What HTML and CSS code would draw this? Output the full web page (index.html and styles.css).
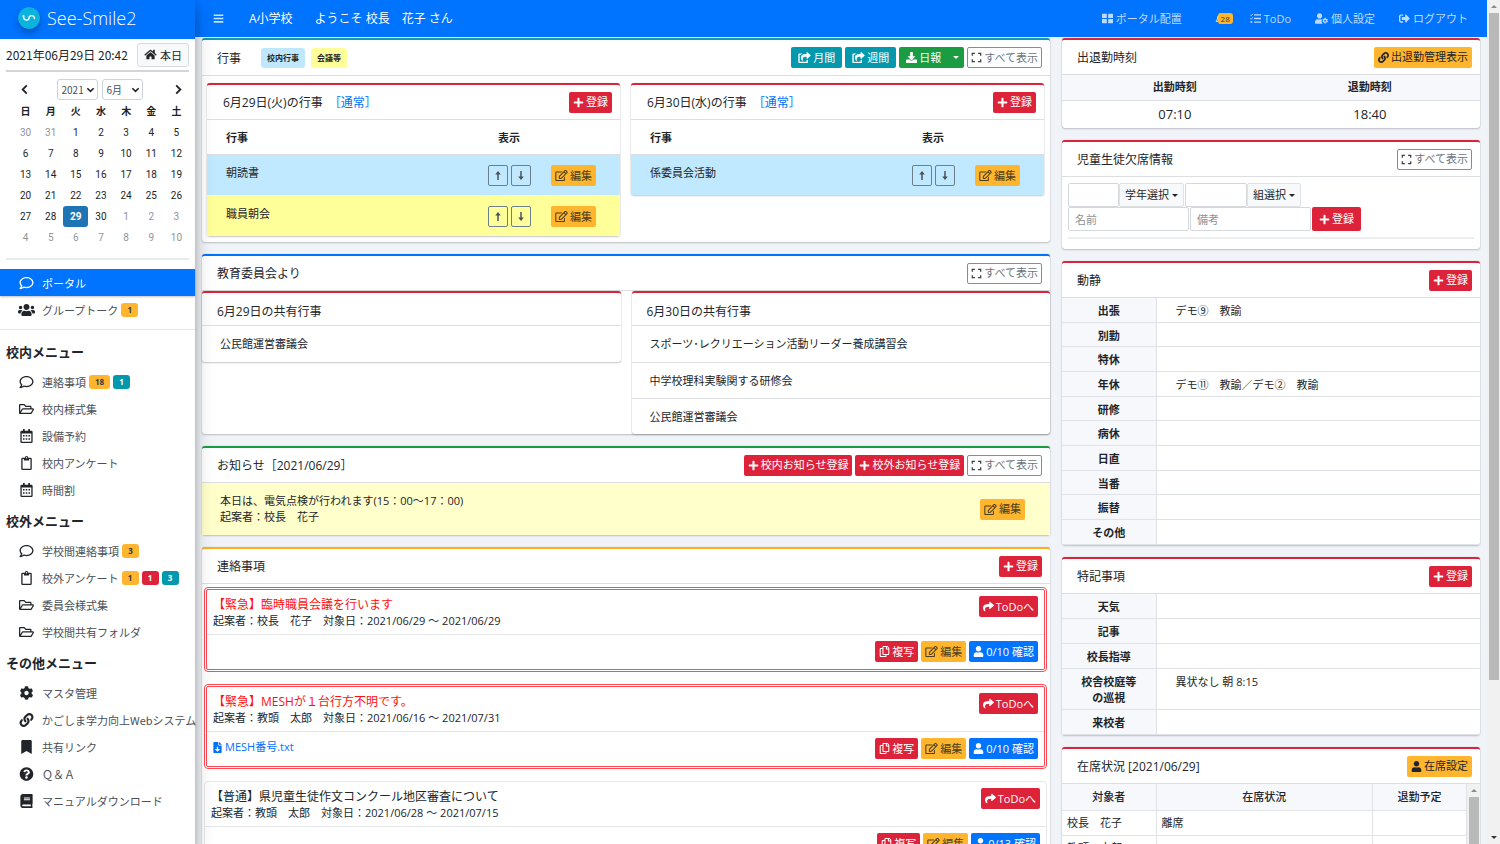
FILE: index.html
```html
<!DOCTYPE html>
<html lang="ja">
<head>
<meta charset="utf-8">
<title>See-Smile2</title>
<link rel="stylesheet" href="styles.css">
</head>
<body>
<svg class="sprite" aria-hidden="true">
  <symbol id="i-plus" viewBox="0 0 448 512"><path d="M416 208H272V64c0-17.67-14.33-32-32-32h-32c-17.67 0-32 14.33-32 32v144H32c-17.67 0-32 14.33-32 32v32c0 17.67 14.33 32 32 32h144v144c0 17.67 14.33 32 32 32h32c17.67 0 32-14.33 32-32V304h144c17.67 0 32-14.33 32-32v-32c0-17.67-14.33-32-32-32z"/></symbol>
  <symbol id="i-bars" viewBox="0 0 448 512"><path d="M0 64h448v72H0zM0 220h448v72H0zM0 376h448v72H0z"/></symbol>
  <symbol id="i-user" viewBox="0 0 448 512"><path d="M224 256c70.7 0 128-57.3 128-128S294.7 0 224 0 96 57.3 96 128s57.3 128 128 128zm89.6 32h-16.7c-22.2 10.2-46.9 16-72.9 16s-50.6-5.8-72.9-16h-16.7C60.2 288 0 348.2 0 422.4V464c0 26.5 21.5 48 48 48h352c26.5 0 48-21.5 48-48v-41.6c0-74.2-60.2-134.4-134.4-134.4z"/></symbol>
  <symbol id="i-edit" viewBox="0 0 576 512"><path d="M402.3 344.9l32-32c5-5 13.7-1.5 13.7 5.7V464c0 26.5-21.5 48-48 48H48c-26.5 0-48-21.5-48-48V112c0-26.5 21.5-48 48-48h273.5c7.1 0 10.7 8.6 5.7 13.7l-32 32c-1.5 1.5-3.5 2.3-5.7 2.3H48v352h352V350.5c0-2.1.8-4.1 2.3-5.6zm156.6-201.8L296.3 405.7l-90.4 10c-26.2 2.9-48.5-19.2-45.6-45.6l10-90.4L432.9 17.1c22.9-22.9 59.9-22.9 82.7 0l43.2 43.2c22.9 22.9 22.9 60 .1 82.8zM460.1 174L402 115.9 216.2 301.8l-7.3 65.3 65.3-7.3L460.1 174zm64.8-79.7l-43.2-43.2c-4.1-4.1-10.8-4.1-14.8 0L436 82l58.1 58.1 30.9-30.9c4-4.2 4-10.8-.1-14.9z"/></symbol>
  <symbol id="i-link" viewBox="0 0 512 512"><path d="M326.612 185.391c59.747 59.809 58.927 155.698.36 214.59-.11.12-.24.25-.36.37l-67.2 67.2c-59.27 59.27-155.699 59.262-214.96 0-59.27-59.26-59.27-155.7 0-214.96l37.106-37.106c9.84-9.84 26.786-3.3 27.294 10.606.648 17.722 3.826 35.527 9.69 52.721 1.986 5.822.567 12.262-3.783 16.612l-13.087 13.087c-28.026 28.026-28.905 73.66-1.155 101.96 28.024 28.579 74.086 28.749 102.325.51l67.2-67.19c28.191-28.191 28.073-73.757 0-101.83-3.701-3.694-7.429-6.564-10.341-8.569a16.037 16.037 0 0 1-6.947-12.606c-.396-10.567 3.348-21.456 11.698-29.806l21.054-21.055c5.521-5.521 14.182-6.199 20.584-1.731a152.482 152.482 0 0 1 20.522 17.197zM467.547 44.449c-59.261-59.262-155.69-59.27-214.96 0l-67.2 67.2c-.12.12-.25.25-.36.37-58.566 58.892-59.387 154.781.36 214.59a152.454 152.454 0 0 0 20.521 17.196c6.402 4.468 15.064 3.789 20.584-1.731l21.054-21.055c8.35-8.35 12.094-19.239 11.698-29.806a16.037 16.037 0 0 0-6.947-12.606c-2.912-2.005-6.64-4.875-10.341-8.569-28.073-28.073-28.191-73.639 0-101.83l67.2-67.19c28.239-28.239 74.3-28.069 102.325.51 27.75 28.3 26.872 73.934-1.155 101.96l-13.087 13.087c-4.35 4.35-5.769 10.79-3.783 16.612 5.864 17.194 9.042 34.999 9.69 52.721.509 13.906 17.454 20.446 27.294 10.606l37.106-37.106c59.271-59.259 59.271-155.699.001-214.959z"/></symbol>
  <symbol id="i-share" viewBox="0 0 512 512"><path d="M503.691 189.836L327.687 37.851C312.281 24.546 288 35.347 288 56.015v80.053C127.371 137.907 0 170.1 0 322.326c0 61.441 39.581 122.309 83.333 154.132 13.653 9.931 33.111-2.533 28.077-18.631C66.066 312.814 132.917 274.316 288 272.085V360c0 20.7 24.3 31.453 39.687 18.164l176.004-152c11.071-9.562 11.086-26.753 0-36.328z"/></symbol>
  <symbol id="i-export" viewBox="0 0 576 512"><path d="M568.482 177.448L424.479 313.433C409.3 327.768 384 317.14 384 295.985v-71.963c-144.575.97-205.566 35.113-164.775 171.353 4.483 14.973-12.846 26.567-25.006 17.33C155.252 383.105 120 326.488 120 269.339c0-143.937 117.599-172.5 264-173.312V24.012c0-21.174 25.317-31.768 40.479-17.448l144.003 135.988c10.02 9.463 10.028 25.425 0 34.896zM384 379.128V448H64V128h50.916a11.99 11.99 0 0 0 8.648-3.693c14.953-15.568 32.237-27.89 51.014-37.676C185.708 80.83 181.584 64 169.033 64H48C21.49 64 0 85.49 0 112v352c0 26.51 21.49 48 48 48h352c26.51 0 48-21.49 48-48v-88.806c0-8.288-8.197-14.066-16.011-11.302a71.83 71.83 0 0 1-34.189 3.377c-7.27-1.046-13.8 4.514-13.8 11.859z"/></symbol>
  <symbol id="i-download" viewBox="0 0 512 512"><path d="M216 0h80c13.3 0 24 10.7 24 24v168h87.7c17.8 0 26.7 21.5 14.1 34.1L269.7 378.3c-7.5 7.5-19.8 7.5-27.3 0L90.1 226.1c-12.6-12.6-3.7-34.1 14.1-34.1H192V24c0-13.3 10.7-24 24-24zm296 376v112c0 13.3-10.7 24-24 24H24c-13.3 0-24-10.7-24-24V376c0-13.3 10.7-24 24-24h146.7l49 49c20.1 20.1 52.5 20.1 72.6 0l49-49H488c13.3 0 24 10.7 24 24z"/></symbol>
  <symbol id="i-expand" viewBox="0 0 448 512"><path d="M28 180V60h120M300 60h120v120M420 332v120H300M148 452H28V332" fill="none" stroke="currentColor" stroke-width="56"/></symbol>
  <symbol id="i-comment" viewBox="0 0 512 512"><path d="M256 32C114.6 32 0 125.1 0 240c0 47.6 19.9 91.2 52.9 126.3C38 405.7 7 439.1 6.5 439.5c-6.6 7-8.4 17.2-4.6 26S14.4 480 24 480c61.5 0 110-25.7 139.1-46.3C192 442.8 223.2 448 256 448c141.4 0 256-93.1 256-208S397.4 32 256 32zm0 368c-26.7 0-53.1-4.1-78.4-12.1l-22.7-7.2-19.5 13.8c-14.3 10.1-33.9 21.4-57.5 29 7.3-12.1 14.4-25.7 19.9-40.2l10.6-28.1-20.6-21.8C69.7 314.1 48 282.2 48 240c0-88.2 93.3-160 208-160s208 71.8 208 160-93.3 160-208 160z"/></symbol>
  <symbol id="i-folder" viewBox="0 0 576 512"><path d="M527.9 224H480v-48c0-26.5-21.5-48-48-48H272l-64-64H48C21.5 64 0 85.5 0 112v288c0 26.5 21.5 48 48 48h400c16.5 0 31.9-8.5 40.7-22.6l79.9-128c20-31.9-3-73.4-40.7-73.4zM48 118c0-3.3 2.7-6 6-6h134.1l64 64H426c3.3 0 6 2.7 6 6v42H152c-16.8 0-32.4 8.8-41.1 23.2L48 351.4zm400 282H72l77.2-128H528z"/></symbol>
  <symbol id="i-calendar" viewBox="0 0 448 512"><path fill-rule="evenodd" d="M48 64h48V12q0-12 12-12h40q12 0 12 12v52h128V12q0-12 12-12h40q12 0 12 12v52h48q48 0 48 48v352q0 48-48 48H48q-48 0-48-48V112q0-48 48-48zm0 96v304h352V160zM96 220h56v56H96zm100 0h56v56h-56zm100 0h56v56h-56zM96 340h56v56H96zm100 0h56v56h-56zm100 0h56v56h-56z"/></symbol>
  <symbol id="i-clipboard" viewBox="0 0 384 512"><path fill-rule="evenodd" d="M48 64h80a64 64 0 0 1 128 0h80q48 0 48 48v352q0 48-48 48H48q-48 0-48-48V112q0-48 48-48zm0 48v352h288V112h-48v36q0 12-12 12H108q-12 0-12-12v-36zm144-72a24 24 0 1 0 0 48 24 24 0 0 0 0-48z"/></symbol>
  <symbol id="i-users" viewBox="0 0 640 512"><path d="M96 224c35.3 0 64-28.7 64-64s-28.7-64-64-64-64 28.7-64 64 28.7 64 64 64zm448 0c35.3 0 64-28.7 64-64s-28.7-64-64-64-64 28.7-64 64 28.7 64 64 64zm32 32h-64c-17.6 0-33.5 7.1-45.1 18.6 40.3 22.1 68.9 62 75.1 109.4h66c17.7 0 32-14.3 32-32v-32c0-35.3-28.7-64-64-64zm-256 0c61.9 0 112-50.1 112-112S381.9 32 320 32 208 82.1 208 144s50.1 112 112 112zm76.8 32h-8.3c-20.8 10-43.9 16-68.5 16s-47.6-6-68.5-16h-8.3C179.6 288 128 339.6 128 403.2V432c0 26.5 21.5 48 48 48h288c26.5 0 48-21.5 48-48v-28.8c0-63.6-51.6-115.2-115.2-115.2zm-223.7-13.4C161.5 263.1 145.6 256 128 256H64c-35.3 0-64 28.7-64 64v32c0 17.7 14.3 32 32 32h65.9c6.3-47.4 34.9-87.3 75.2-109.4z"/></symbol>
  <symbol id="i-cog" viewBox="0 0 512 512"><path d="M487.4 315.7l-42.6-24.6c4.3-23.2 4.3-47 0-70.2l42.6-24.6c4.9-2.8 7.1-8.6 5.5-14-11.1-35.6-30-67.8-54.7-94.6-3.8-4.1-10-5.1-14.8-2.3L380.8 110c-17.9-15.4-38.5-27.3-60.8-35.1V25.8c0-5.6-3.9-10.5-9.4-11.7-36.7-8.2-74.3-7.8-109.2 0-5.5 1.2-9.4 6.1-9.4 11.7V75c-22.2 7.9-42.8 19.8-60.8 35.1L88.7 85.5c-4.9-2.8-11-1.9-14.8 2.3-24.7 26.7-43.6 58.9-54.7 94.6-1.7 5.4.6 11.2 5.5 14L67.3 221c-4.3 23.2-4.3 47 0 70.2l-42.6 24.6c-4.9 2.8-7.1 8.6-5.5 14 11.1 35.6 30 67.8 54.7 94.6 3.8 4.1 10 5.1 14.8 2.3l42.6-24.6c17.9 15.4 38.5 27.3 60.8 35.1v49.2c0 5.6 3.9 10.5 9.4 11.7 36.7 8.2 74.3 7.8 109.2 0 5.5-1.2 9.4-6.1 9.4-11.7v-49.2c22.2-7.9 42.8-19.8 60.8-35.1l42.6 24.6c4.9 2.8 11 1.9 14.8-2.3 24.7-26.7 43.6-58.9 54.7-94.6 1.5-5.5-.7-11.3-5.6-14.1zM256 336c-44.1 0-80-35.9-80-80s35.9-80 80-80 80 35.9 80 80-35.9 80-80 80z"/></symbol>
  <symbol id="i-usercog" viewBox="0 0 640 512"><path d="M224 256c70.7 0 128-57.3 128-128S294.7 0 224 0 96 57.3 96 128s57.3 128 128 128zM340 290q-30-4-43 -2c-22.2 10.2-46.9 16-72.9 16s-50.6-5.8-72.9-16h-16.7C60.2 288 0 348.2 0 422.4V464c0 26.5 21.5 48 48 48h330q-90-90-38-222z"/><path fill-rule="evenodd" d="M470 224h60l10 40 26 14 40-12 30 52-30 28v30l30 28-30 52-40-12-26 14-10 42h-60l-10-42-26-14-40 12-30-52 30-28v-30l-30-28 30-52 40 12 26-14zm30 92a45 45 0 1 0 0 90 45 45 0 0 0 0-90z"/></symbol>
  <symbol id="i-bookmark" viewBox="0 0 384 512"><path d="M0 512V48C0 21.49 21.49 0 48 0h288c26.51 0 48 21.49 48 48v464L192 400 0 512z"/></symbol>
  <symbol id="i-question" viewBox="0 0 512 512"><path d="M504 256c0 136.997-111.043 248-248 248S8 392.997 8 256C8 119.083 119.043 8 256 8s248 111.083 248 248zM262.655 90c-54.497 0-89.255 22.957-116.549 63.758-3.536 5.286-2.353 12.415 2.715 16.258l34.699 26.31c5.205 3.947 12.621 3.008 16.665-2.122 17.864-22.658 30.113-35.797 57.303-35.797 20.429 0 45.698 13.148 45.698 32.958 0 14.976-12.363 22.667-32.534 33.976C247.128 238.528 216 254.941 216 296v4c0 6.627 5.373 12 12 12h56c6.627 0 12-5.373 12-12v-1.333c0-28.462 83.186-29.647 83.186-106.667 0-58.002-60.165-102-116.531-102zM256 338c-25.365 0-46 20.635-46 46 0 25.364 20.635 46 46 46s46-20.636 46-46c0-25.365-20.635-46-46-46z"/></symbol>
  <symbol id="i-book" viewBox="0 0 448 512"><path d="M448 360V24c0-13.3-10.7-24-24-24H96C43 0 0 43 0 96v320c0 53 43 96 96 96h328c13.3 0 24-10.7 24-24v-16c0-7.5-3.5-14.3-8.9-18.7-4.2-15.4-4.2-59.3 0-74.7 5.4-4.3 8.9-11.1 8.9-18.6zM128 134c0-3.3 2.7-6 6-6h212c3.3 0 6 2.7 6 6v20c0 3.3-2.7 6-6 6H134c-3.3 0-6-2.7-6-6v-20zm0 64c0-3.3 2.7-6 6-6h212c3.3 0 6 2.7 6 6v20c0 3.3-2.7 6-6 6H134c-3.3 0-6-2.7-6-6v-20zm253.4 250H96c-17.7 0-32-14.3-32-32 0-17.6 14.4-32 32-32h285.4c-1.9 17.1-1.9 46.9 0 64z"/></symbol>
  <symbol id="i-home" viewBox="0 0 576 512"><path d="M280.37 148.26L96 300.11V464a16 16 0 0 0 16 16l112.06-.29a16 16 0 0 0 15.92-16V368a16 16 0 0 1 16-16h64a16 16 0 0 1 16 16v95.64a16 16 0 0 0 16 16.05L464 480a16 16 0 0 0 16-16V300L295.67 148.26a12.19 12.19 0 0 0-15.3 0zM571.6 251.47L488 182.56V44.05a12 12 0 0 0-12-12h-56a12 12 0 0 0-12 12v72.61L318.47 43a48 48 0 0 0-61 0L4.34 251.47a12 12 0 0 0-1.6 16.9l25.5 31A12 12 0 0 0 45.15 301l235.22-193.74a12.19 12.19 0 0 1 15.3 0L530.9 301a12 12 0 0 0 16.9-1.6l25.5-31a12 12 0 0 0-1.7-16.93z"/></symbol>
  <symbol id="i-grid" viewBox="0 0 512 512"><path d="M0 56q0-16 16-16h208v196H0zM288 40h208q16 0 16 16v180H288zM0 284h224v188H16q-16 0-16-16zM288 284h224v172q0 16-16 16H288z"/></symbol>
  <symbol id="i-bell" viewBox="0 0 448 512"><path d="M439.39 362.29c-19.32-20.76-55.47-51.99-55.47-154.29 0-77.7-54.48-139.9-127.94-155.16V32c0-17.67-14.32-32-31.98-32s-31.98 14.33-31.98 32v20.84C118.56 68.1 64.08 130.3 64.08 208c0 102.3-36.15 133.53-55.47 154.29-6 6.45-8.66 14.16-8.61 21.71.11 16.4 12.98 32 32.1 32h383.8c19.12 0 32-15.6 32.1-32 .05-7.55-2.61-15.27-8.61-21.71zM67.53 368c21.22-27.97 44.42-74.33 44.53-159.42 0-.2-.06-.38-.06-.58 0-61.86 50.14-112 112-112s112 50.14 112 112c0 .2-.06.38-.06.58.11 85.1 23.31 131.46 44.53 159.42H67.53zM224 512c35.32 0 63.97-28.65 63.97-64H160.03c0 35.35 28.65 64 63.97 64z"/></symbol>
  <symbol id="i-tasks" viewBox="0 0 512 512"><path d="M190 92h322M190 256h322M190 420h322" stroke="currentColor" stroke-width="60"/><path d="M14 84l42 42 84-92M14 248l42 42 84-92" fill="none" stroke="currentColor" stroke-width="42"/><circle cx="62" cy="420" r="46"/></symbol>
  <symbol id="i-logout" viewBox="0 0 512 512"><path d="M497 273L329 441c-15 15-41 4.5-41-17v-96H152c-13.3 0-24-10.7-24-24v-96c0-13.3 10.7-24 24-24h136V88c0-21.4 25.9-32 41-17l168 168c9.3 9.4 9.3 24.6 0 34zM192 436v-40c0-6.6-5.4-12-12-12H96c-17.7 0-32-14.3-32-32V160c0-17.7 14.3-32 32-32h84c6.6 0 12-5.4 12-12V76c0-6.6-5.4-12-12-12H96c-53 0-96 43-96 96v192c0 53 43 96 96 96h84c6.6 0 12-5.4 12-12z"/></symbol>
  <symbol id="i-copy" viewBox="0 0 448 512"><path d="M433.941 65.941l-51.882-51.882A48 48 0 0 0 348.118 0H176c-26.51 0-48 21.49-48 48v48H48c-26.51 0-48 21.49-48 48v320c0 26.51 21.49 48 48 48h224c26.51 0 48-21.49 48-48v-48h80c26.51 0 48-21.49 48-48V99.882a48 48 0 0 0-14.059-33.941zM266 464H54a6 6 0 0 1-6-6V150a6 6 0 0 1 6-6h74v224c0 26.51 21.49 48 48 48h96v42a6 6 0 0 1-6 6zm128-96H182a6 6 0 0 1-6-6V54a6 6 0 0 1 6-6h106v88c0 13.255 10.745 24 24 24h88v202a6 6 0 0 1-6 6zm6-256h-64V48h9.632c1.591 0 3.117.632 4.243 1.757l48.368 48.368a6 6 0 0 1 1.757 4.243V112z"/></symbol>
  <symbol id="i-file" viewBox="0 0 384 512"><path d="M224 136V0H24C10.7 0 0 10.7 0 24v464c0 13.3 10.7 24 24 24h336c13.3 0 24-10.7 24-24V160H248c-13.2 0-24-10.8-24-24zm76.45 211.36l-96.42 95.7c-6.65 6.61-17.39 6.61-24.04 0l-96.42-95.7C73.42 337.29 80.54 320 94.82 320H160v-80c0-8.84 7.16-16 16-16h32c8.84 0 16 7.16 16 16v80h65.18c14.28 0 21.4 17.29 11.27 27.36zM377 105L279.1 7c-4.5-4.5-10.6-7-17-7H256v128h128v-6.1c0-6.3-2.5-12.4-7-16.9z"/></symbol>
  <symbol id="i-left" viewBox="0 0 10 12"><path d="M7.500 1.500L3 6l4.500 4.500" fill="none" stroke="currentColor" stroke-width="2"/></symbol>
  <symbol id="i-right" viewBox="0 0 10 12"><path d="M2.500 1.500L7 6l-4.500 4.500" fill="none" stroke="currentColor" stroke-width="2"/></symbol>
  <symbol id="i-down" viewBox="0 0 10 8"><path d="M1.500 2L5 5.500 8.500 2" fill="none" stroke="currentColor" stroke-width="1.800"/></symbol>
  <symbol id="i-up-arrow" viewBox="0 0 10 12"><path d="M5 11V3" stroke="currentColor" stroke-width="1.600"/><path d="M2 5l3-4 3 4z"/></symbol>
  <symbol id="i-down-arrow" viewBox="0 0 10 12"><path d="M5 1v8" stroke="currentColor" stroke-width="1.600"/><path d="M2 7l3 4 3-4z"/></symbol>
</svg>

<div class="app">
  <aside class="sidebar">
    <a class="brand" href="#">
      <svg class="brand-logo" viewBox="0 0 22 22" aria-hidden="true"><circle cx="11" cy="11" r="11" fill="#0cb3dc"/><path d="M5.500 9.500c0 4.500 5.500 4.500 5.500 1.500s5-3.500 5.500 .5" fill="none" stroke="#fff" stroke-width="1.400" stroke-linecap="round"/><circle cx="5.500" cy="9" r="1" fill="#fff"/></svg>
      <span>See-Smile2</span>
    </a>
    <div class="today">
      <time>2021年06月29日 20:42</time>
      <button class="btn-today"><svg class="icon wide"><use href="#i-home"/></svg>本日</button>
    </div>
    <div class="calendar">
      <div class="cal-nav">
        <button class="cal-move" aria-label="前の月"><svg class="icon"><use href="#i-left"/></svg></button>
        <div class="cal-selects">
          <div class="pick"><select aria-label="年"><option>2021</option></select><svg><use href="#i-down"/></svg></div>
          <div class="pick"><select aria-label="月"><option>6月</option></select><svg><use href="#i-down"/></svg></div>
        </div>
        <button class="cal-move" aria-label="次の月"><svg class="icon"><use href="#i-right"/></svg></button>
      </div>
      <table class="cal-table">
        <thead><tr><th>日</th><th>月</th><th>火</th><th>水</th><th>木</th><th>金</th><th>土</th></tr></thead>
        <tbody>
          <tr><td class="out">30</td><td class="out">31</td><td>1</td><td>2</td><td>3</td><td>4</td><td>5</td></tr>
          <tr><td>6</td><td>7</td><td>8</td><td>9</td><td>10</td><td>11</td><td>12</td></tr>
          <tr><td>13</td><td>14</td><td>15</td><td>16</td><td>17</td><td>18</td><td>19</td></tr>
          <tr><td>20</td><td>21</td><td>22</td><td>23</td><td>24</td><td>25</td><td>26</td></tr>
          <tr><td>27</td><td>28</td><td class="selected">29</td><td>30</td><td class="out">1</td><td class="out">2</td><td class="out">3</td></tr>
          <tr><td class="out">4</td><td class="out">5</td><td class="out">6</td><td class="out">7</td><td class="out">8</td><td class="out">9</td><td class="out">10</td></tr>
        </tbody>
      </table>
    </div>
    <nav class="menu">
      <a class="active" href="#"><svg><use href="#i-comment"/></svg>ポータル</a>
      <a href="#"><svg class="big"><use href="#i-users"/></svg>グループトーク<span class="badge warn">1</span></a>
      <hr>
      <h2>校内メニュー</h2>
      <a href="#"><svg><use href="#i-comment"/></svg>連絡事項<span class="badge warn">18</span><span class="badge info">1</span></a>
      <a href="#"><svg><use href="#i-folder"/></svg>校内様式集</a>
      <a href="#"><svg><use href="#i-calendar"/></svg>設備予約</a>
      <a href="#"><svg><use href="#i-clipboard"/></svg>校内アンケート</a>
      <a href="#"><svg><use href="#i-calendar"/></svg>時間割</a>
      <h2>校外メニュー</h2>
      <a href="#"><svg><use href="#i-comment"/></svg>学校間連絡事項<span class="badge warn">3</span></a>
      <a href="#"><svg><use href="#i-clipboard"/></svg>校外アンケート<span class="badge warn">1</span><span class="badge danger">1</span><span class="badge info">3</span></a>
      <a href="#"><svg><use href="#i-folder"/></svg>委員会様式集</a>
      <a href="#"><svg><use href="#i-folder"/></svg>学校間共有フォルダ</a>
      <h2>その他メニュー</h2>
      <a href="#"><svg><use href="#i-cog"/></svg>マスタ管理</a>
      <a href="#"><svg><use href="#i-link"/></svg>かごしま学力向上Webシステム</a>
      <a href="#"><svg><use href="#i-bookmark"/></svg>共有リンク</a>
      <a href="#"><svg><use href="#i-question"/></svg>Ｑ＆Ａ</a>
      <a href="#"><svg><use href="#i-book"/></svg>マニュアルダウンロード</a>
    </nav>
  </aside>

  <div class="page">
    <header class="navbar">
      <button class="burger" aria-label="メニュー"><svg class="icon"><use href="#i-bars"/></svg></button>
      <span class="school">A小学校</span>
      <span class="welcome">ようこそ 校長　花子 さん</span>
      <nav class="navlinks">
        <a href="#"><svg class="icon"><use href="#i-grid"/></svg>ポータル配置</a>
        <a class="bell" href="#" aria-label="通知 28"><svg class="icon"><use href="#i-bell"/></svg><span class="bell-count">28</span></a>
        <a class="todo" href="#"><svg class="icon"><use href="#i-tasks"/></svg>ToDo</a>
        <a href="#"><svg class="icon wide"><use href="#i-usercog"/></svg>個人設定</a>
        <a href="#"><svg class="icon"><use href="#i-logout"/></svg>ログアウト</a>
      </nav>
    </header>

    <main class="content">
      <div class="col-main">
        <section class="card teal">
          <div class="card-head tall">
            <h3>行事</h3>
            <span class="tag blue">校内行事</span><span class="tag yellow">会議等</span>
            <div class="tools">
              <button class="btn info"><svg class="icon wide"><use href="#i-export"/></svg>月間</button>
              <button class="btn info"><svg class="icon wide"><use href="#i-export"/></svg>週間</button>
              <button class="btn success"><svg class="icon"><use href="#i-download"/></svg>日報<i class="caret apart"></i></button>
              <button class="btn outline"><svg class="icon"><use href="#i-expand"/></svg>すべて表示</button>
            </div>
          </div>
          <div class="pair inset">
            <section class="card red">
              <div class="card-head"><h3>6月29日(火)の行事 <a href="#">［通常］</a></h3><div class="tools"><button class="btn danger"><svg class="icon"><use href="#i-plus"/></svg>登録</button></div></div>
              <table class="events">
                <thead><tr><th>行事</th><th class="c-order">表示</th><th class="c-edit"></th></tr></thead>
                <tbody>
                  <tr class="blue"><td>朝読書</td><td class="c-order"><button class="move" aria-label="上へ"><svg><use href="#i-up-arrow"/></svg></button><button class="move" aria-label="下へ"><svg><use href="#i-down-arrow"/></svg></button></td><td class="c-edit"><button class="btn warn"><svg class="icon wide"><use href="#i-edit"/></svg>編集</button></td></tr>
                  <tr class="yellow"><td>職員朝会</td><td class="c-order"><button class="move" aria-label="上へ"><svg><use href="#i-up-arrow"/></svg></button><button class="move" aria-label="下へ"><svg><use href="#i-down-arrow"/></svg></button></td><td class="c-edit"><button class="btn warn"><svg class="icon wide"><use href="#i-edit"/></svg>編集</button></td></tr>
                </tbody>
              </table>
            </section>
            <section class="card red">
              <div class="card-head"><h3>6月30日(水)の行事 <a href="#">［通常］</a></h3><div class="tools"><button class="btn danger"><svg class="icon"><use href="#i-plus"/></svg>登録</button></div></div>
              <table class="events">
                <thead><tr><th>行事</th><th class="c-order">表示</th><th class="c-edit"></th></tr></thead>
                <tbody>
                  <tr class="blue"><td>係委員会活動</td><td class="c-order"><button class="move" aria-label="上へ"><svg><use href="#i-up-arrow"/></svg></button><button class="move" aria-label="下へ"><svg><use href="#i-down-arrow"/></svg></button></td><td class="c-edit"><button class="btn warn"><svg class="icon wide"><use href="#i-edit"/></svg>編集</button></td></tr>
                </tbody>
              </table>
            </section>
          </div>
        </section>

        <section class="card primary">
          <div class="card-head">
            <h3>教育委員会より</h3>
            <div class="tools"><button class="btn outline"><svg class="icon"><use href="#i-expand"/></svg>すべて表示</button></div>
          </div>
          <div class="pair">
            <section class="card red">
              <div class="card-head short"><h3>6月29日の共有行事</h3></div>
              <ul class="shared"><li>公民館運営審議会</li></ul>
            </section>
            <section class="card red">
              <div class="card-head short"><h3>6月30日の共有行事</h3></div>
              <ul class="shared"><li>スポーツ･レクリエーション活動リーダー養成講習会</li><li>中学校理科実験関する研修会</li><li>公民館運営審議会</li></ul>
            </section>
          </div>
        </section>

        <section class="card green">
          <div class="card-head">
            <h3>お知らせ［2021/06/29］</h3>
            <div class="tools">
              <button class="btn danger"><svg class="icon"><use href="#i-plus"/></svg>校内お知らせ登録</button>
              <button class="btn danger"><svg class="icon"><use href="#i-plus"/></svg>校外お知らせ登録</button>
              <button class="btn outline"><svg class="icon"><use href="#i-expand"/></svg>すべて表示</button>
            </div>
          </div>
          <div class="news">
            <p>本日は、電気点検が行われます(15：00～17：00)<br>起案者：校長　花子</p>
            <button class="btn warn"><svg class="icon wide"><use href="#i-edit"/></svg>編集</button>
          </div>
        </section>

        <section class="card amber">
          <div class="card-head">
            <h3>連絡事項</h3>
            <div class="tools"><button class="btn danger"><svg class="icon"><use href="#i-plus"/></svg>登録</button></div>
          </div>
          <div class="notices">
            <article class="notice urgent">
              <div class="notice-head"><div><h4>【緊急】臨時職員会議を行います</h4><p>起案者：校長　花子　対象日：2021/06/29 ～ 2021/06/29</p></div><button class="btn danger"><svg class="icon"><use href="#i-share"/></svg>ToDoへ</button></div>
              <div class="notice-foot"><div class="tools"><button class="btn danger"><svg class="icon"><use href="#i-copy"/></svg>複写</button><button class="btn warn"><svg class="icon wide"><use href="#i-edit"/></svg>編集</button><button class="btn primary"><svg class="icon"><use href="#i-user"/></svg>0/10 確認</button></div></div>
            </article>
            <article class="notice urgent">
              <div class="notice-head"><div><h4>【緊急】MESHが１台行方不明です。</h4><p>起案者：教頭　太郎　対象日：2021/06/16 ～ 2021/07/31</p></div><button class="btn danger"><svg class="icon"><use href="#i-share"/></svg>ToDoへ</button></div>
              <div class="notice-foot"><a class="file" href="#"><svg><use href="#i-file"/></svg>MESH番号.txt</a><div class="tools"><button class="btn danger"><svg class="icon"><use href="#i-copy"/></svg>複写</button><button class="btn warn"><svg class="icon wide"><use href="#i-edit"/></svg>編集</button><button class="btn primary"><svg class="icon"><use href="#i-user"/></svg>0/10 確認</button></div></div>
            </article>
            <article class="notice">
              <div class="notice-head"><div><h4>【普通】県児童生徒作文コンクール地区審査について</h4><p>起案者：教頭　太郎　対象日：2021/06/28 ～ 2021/07/15</p></div><button class="btn danger"><svg class="icon"><use href="#i-share"/></svg>ToDoへ</button></div>
              <div class="notice-foot"><div class="tools"><button class="btn danger"><svg class="icon"><use href="#i-copy"/></svg>複写</button><button class="btn warn"><svg class="icon wide"><use href="#i-edit"/></svg>編集</button><button class="btn primary"><svg class="icon"><use href="#i-user"/></svg>0/13 確認</button></div></div>
            </article>
          </div>
        </section>
      </div>

      <div class="col-side">
        <section class="card red">
          <div class="card-head"><h3>出退勤時刻</h3><div class="tools"><button class="btn warn dark"><svg class="icon"><use href="#i-link"/></svg>出退勤管理表示</button></div></div>
          <table class="clock">
            <thead><tr><th>出勤時刻</th><th>退勤時刻</th></tr></thead>
            <tbody><tr><td>07:10</td><td>18:40</td></tr></tbody>
          </table>
        </section>

        <section class="card red">
          <div class="card-head"><h3>児童生徒欠席情報</h3><div class="tools"><button class="btn outline"><svg class="icon"><use href="#i-expand"/></svg>すべて表示</button></div></div>
          <form class="absence">
            <div class="line"><input class="w-grade" type="text" aria-label="学年"><button class="drop" type="button">学年選択<i class="caret"></i></button><input class="w-class" type="text" aria-label="組"><button class="drop" type="button">組選択<i class="caret"></i></button></div>
            <div class="line"><input class="w-text" type="text" placeholder="名前" aria-label="名前"><input class="w-text" type="text" placeholder="備考" aria-label="備考"><button class="btn danger submit" type="button"><svg class="icon"><use href="#i-plus"/></svg>登録</button></div>
            <hr>
          </form>
        </section>

        <section class="card red">
          <div class="card-head"><h3>動静</h3><div class="tools"><button class="btn danger"><svg class="icon"><use href="#i-plus"/></svg>登録</button></div></div>
          <table class="facts status">
            <tr><th>出張</th><td>デモ⑨　教諭</td></tr>
            <tr><th>別勤</th><td></td></tr>
            <tr><th>特休</th><td></td></tr>
            <tr><th>年休</th><td>デモ⑪　教諭／デモ②　教諭</td></tr>
            <tr><th>研修</th><td></td></tr>
            <tr><th>病休</th><td></td></tr>
            <tr><th>日直</th><td></td></tr>
            <tr><th>当番</th><td></td></tr>
            <tr><th>振替</th><td></td></tr>
            <tr><th>その他</th><td></td></tr>
          </table>
        </section>

        <section class="card red">
          <div class="card-head"><h3>特記事項</h3><div class="tools"><button class="btn danger"><svg class="icon"><use href="#i-plus"/></svg>登録</button></div></div>
          <table class="facts remarks">
            <tr><th>天気</th><td></td></tr>
            <tr><th>記事</th><td></td></tr>
            <tr><th>校長指導</th><td></td></tr>
            <tr><th>校舎校庭等<br>の巡視</th><td>異状なし 朝 8:15</td></tr>
            <tr><th>来校者</th><td></td></tr>
          </table>
        </section>

        <section class="card red">
          <div class="card-head"><h3>在席状況 [2021/06/29]</h3><div class="tools"><button class="btn warn dark"><svg class="icon"><use href="#i-user"/></svg>在席設定</button></div></div>
          <div class="presence">
            <table>
              <thead><tr><th class="c-name">対象者</th><th>在席状況</th><th class="c-leave">退勤予定</th></tr></thead>
              <tbody>
                <tr><td>校長　花子</td><td>離席</td><td></td></tr>
                <tr><td>教頭　太郎</td><td></td><td></td></tr>
                <tr><td></td><td></td><td></td></tr>
              </tbody>
            </table>
            <div class="scroll"><i class="arrow-up"></i><div class="thumb"></div></div>
          </div>
        </section>
      </div>
    </main>
  </div>

  <div class="scroll window-scroll"><i class="arrow-up"></i><div class="thumb"></div><i class="arrow-down"></i></div>
</div>
</body>
</html>
```
FILE: styles.css
```css
* { box-sizing: border-box; }
body {
  margin: 0;
  background: #f0f4f8;
  color: #212529;
  font: 11px/16px "Open Sans", "Noto Sans CJK JP", sans-serif;
}
h2, h3, h4, p, ul { margin: 0; padding: 0; }
h3, h4 { font-size: 12px; font-weight: 400; line-height: 18px; }
ul { list-style: none; }
a { color: #0073ff; text-decoration: none; }
button, input, select { font: inherit; color: inherit; margin: 0; }
button { cursor: pointer; white-space: nowrap; }
table { width: 100%; border-collapse: collapse; }
th, td { padding: 0; }
svg { fill: currentColor; flex: none; }
.sprite { display: none; }
.icon { width: 11px; height: 11px; }
.icon.wide { width: 13px; }

.app { display: flex; height: 100vh; overflow: hidden; }

/* Sidebar */
.sidebar {
  position: relative;
  z-index: 2;
  flex: none;
  width: 195px;
  height: 100%;
  background: #fff;
  box-shadow: 0 10px 18px rgba(0, 0, 0, .22), 0 6px 8px rgba(0, 0, 0, .2);
}
.brand {
  display: flex;
  align-items: center;
  gap: 7px;
  height: 39px;
  padding: 0 0 3px 18px;
  background: #0073ff;
  color: #fff;
  font-size: 18px;
  font-weight: 300;
  line-height: 24px;
}
.brand-logo { width: 22px; height: 22px; border-radius: 50%; box-shadow: 0 4px 6px rgba(0, 0, 0, .25); }
.today {
  display: flex;
  align-items: center;
  justify-content: space-between;
  height: 33px;
  margin: 0 6px;
  border-bottom: 2px solid #d3d5d8;
  font-family: "Noto Sans CJK JP", sans-serif;
  font-size: 12px;
  white-space: nowrap;
}
.btn-today {
  display: flex;
  align-items: center;
  gap: 3px;
  height: 24px;
  padding: 0 6px;
  border: 1px solid #d9dcdf;
  border-radius: 3px;
  background: #f8f9fa;
  font-size: 11px;
}
.calendar { margin: 0 6px; padding: 7px 0 10px 7px; border-bottom: 2px solid #e9ecef; }
.cal-nav { display: flex; align-items: center; justify-content: space-between; padding: 0 5px 1px 6px; }
.cal-move { display: flex; padding: 0; border: 0; background: none; }
.cal-selects { display: flex; gap: 4px; margin-right: 4px; }
.pick { position: relative; display: flex; }
.pick select {
  width: 41px;
  height: 21px;
  padding: 0 0 0 4px;
  appearance: none;
  border: 1px solid #ced4da;
  border-radius: 3px;
  background: #fff;
  color: #495057;
  font-family: "Noto Sans CJK JP", sans-serif;
  font-size: 10px;
}
.pick svg { position: absolute; right: 3px; top: 7px; width: 9px; height: 8px; pointer-events: none; }
.cal-table { table-layout: fixed; text-align: center; font: 10px/21px "Roboto", "Noto Sans CJK JP", sans-serif; }
.cal-table th { height: 21px; font-weight: 700; font-size: 10px; }
.cal-table td { height: 21px; }
.cal-table .out { color: #919598; }
.cal-table .selected { border-radius: 3px; background: #1f74b4; color: #fff; font-weight: 700; }

.menu { padding-top: 9px; font-family: "Noto Sans CJK JP", sans-serif; }
.menu a {
  display: flex;
  align-items: center;
  height: 27px;
  padding-left: 19px;
  color: #495057;
  white-space: nowrap;
}
.menu a svg { width: 15px; height: 14px; margin-right: 8px; color: #212529; }
.menu a svg.big { width: 17px; margin: 0 7px 0 -1px; }
.menu a.active { background: #0073ff; color: #fff; box-shadow: 0 1px 2px rgba(0, 0, 0, .25); }
.menu a.active svg { color: #fff; }
.menu hr { margin: 6px 0 4px; border: 0; border-top: 1px solid #e4e6e9; }
.menu h2 { padding: 1px 0 0 6px; font-size: 13px; line-height: 33px; font-weight: 600; }
.badge {
  min-width: 17px;
  margin-left: 3px;
  padding: 0 6px;
  border-radius: 3px;
  font-family: "Open Sans", sans-serif;
  font-size: 8px;
  font-weight: 700;
  line-height: 14px;
  text-align: center;
}
.badge.warn { background: #ffb52e; color: #343a40; }
.badge.info { background: #0299ae; color: #fff; }
.badge.danger { background: #dc2339; color: #fff; }

/* Top bar */
.page { flex: 1; min-width: 0; }
.navbar {
  display: flex;
  align-items: center;
  height: 37px;
  padding: 0 19px 0 18px;
  background: #0073ff;
  color: #fff;
  font-size: 12px;
  white-space: nowrap;
}
.burger { display: flex; padding: 0; border: 0; background: none; opacity: .8; }
.school { margin-left: 25px; }
.welcome { margin-left: 22px; }
.navlinks { display: flex; align-items: center; gap: 24px; margin-left: auto; font-size: 11px; }
.navlinks a { display: flex; align-items: center; gap: 3px; color: #c0dbff; }
.navlinks .bell { position: relative; width: 18px; margin-left: 9px; }
.navlinks .todo { margin-left: -7px; }
.bell-count {
  position: absolute;
  right: 0;
  padding: 0 3px;
  border-radius: 3px;
  background: #ffb52e;
  color: #343a40;
  font-size: 8px;
  line-height: 11px;
}

/* Content */
.content { display: grid; grid-template-columns: repeat(12, minmax(0, 1fr)); gap: 12px; padding: 1px 7px 0; }
.col-main, .col-side { display: flex; flex-direction: column; gap: 12px; }
.col-main { grid-column: span 8; }
.col-side { grid-column: span 4; }
.card {
  min-width: 0;
  border-top: 2px solid #dc2339;
  border-radius: 3px;
  background: #fff;
  box-shadow: 0 0 1px rgba(0, 0, 0, .3), 0 1px 2px rgba(0, 0, 0, .2);
}
.card.teal { border-color: #1299ae; }
.card.primary { border-color: #0073ff; }
.card.green { border-color: #1a9c43; }
.card.amber { border-color: #ffae21; }
.card-head {
  display: flex;
  align-items: center;
  height: 35px;
  padding: 0 8px 0 15px;
  border-bottom: 1px solid #dcdee1;
}
.card-head h3 { padding-top: 2px; }
.card-head h3 a { margin-left: 3px; }
.card-head.tall { height: 36px; }
.card-head.short { height: 33px; padding-top: 3px; }
.tools { display: flex; gap: 3px; margin-left: auto; }
.tag { padding: 0 6px; border-radius: 3px; font-size: 8px; font-weight: 700; line-height: 20px; }
.tag.blue { margin-left: 20px; background: #bfe8ff; }
.tag.yellow { margin-left: 6px; background: #ffff99; }

.btn {
  display: inline-flex;
  align-items: center;
  gap: 2px;
  height: 21px;
  padding: 0 3px;
  border: 1px solid transparent;
  border-radius: 2px;
  color: #fff;
  line-height: 16px;
}
.btn.info { padding: 0 6px; background: #0299ae; }
.btn.success { padding: 0 4px 0 6px; background: #1a9c43; }
.btn.danger { background: #dc2339; }
.btn.primary { background: #0073ff; }
.btn.warn { background: #ffb52e; color: #4a4020; }
.btn.warn.dark { color: #212529; }
.btn.outline { border-color: #858c93; background: #fff; color: #6c757d; }
.btn.outline .icon { color: #343a40; }
.caret { width: 0; border: 3px solid transparent; border-top-color: currentColor; border-bottom: 0; }
.caret.apart { margin-left: 10px; }

.pair { display: grid; grid-template-columns: repeat(2, minmax(0, 1fr)); gap: 11px; align-items: start; }
.pair.inset { padding: 7px 6px 6px 5px; }
.pair.inset .card-head { padding-left: 16px; }

.events th { height: 34px; padding: 2px 0 0 19px; text-align: left; border-bottom: 1px solid #dcdee1; }
.events td { height: 41px; padding: 0 0 3px 19px; }
.events tr.blue { background: #c0e9ff; }
.events tr.yellow { background: #ffff99; }
.events .c-order { width: 64px; padding: 2px 2px 0 0; text-align: center; white-space: nowrap; }
.events .c-edit { width: 78px; padding: 2px 0 0 9px; }
.events .btn { vertical-align: middle; }
.move { width: 20px; height: 21px; padding: 0; border: 1px solid #6c7f8a; border-radius: 2px; background: none; color: #495057; vertical-align: middle; }
.move + .move { margin-left: 3px; }
.move svg { display: block; width: 10px; height: 11px; margin: 0 auto; }

.shared li { height: 36px; padding-left: 18px; line-height: 35px; border-top: 1px solid #dfe1e4; }
.shared li:first-child { border-top: 0; }

.news { display: flex; align-items: center; justify-content: space-between; padding: 10px 25px 10px 18px; background: #ffffcc; }

.notices { display: flex; flex-direction: column; gap: 12px; padding: 3px 3px 20px 2px; }
.notice { border: 1px solid #e6e8ea; border-radius: 4px; }
.notice.urgent { border: 3px double #ff4a55; background: #fff; }
.notice.urgent h4 { color: #ff1010; }
.notice-head { display: flex; align-items: flex-start; justify-content: space-between; padding: 6px 6px 5px; border-bottom: 1px solid #e3e5e7; }
.notice-head h4 { line-height: 17px; }
.notice-foot { display: flex; align-items: flex-start; padding: 6px 6px 7px; }
.file { display: flex; align-items: center; gap: 3px; padding-top: 1px; }
.file svg { width: 9px; height: 11px; }

.clock { text-align: center; }
.clock th { height: 25px; background: #f6f8fb; border-bottom: 1px solid #dcdee1; }
.clock td { height: 28px; font-size: 13px; }
.clock th:first-child { width: 54%; }
.clock th:last-child, .clock td:last-child { padding-right: 28px; }

.absence { padding: 6px; }
.line { display: flex; gap: 1px; }
.line input { min-width: 0; height: 24px; padding: 0 6px; border: 1px solid #d5d9dd; border-radius: 2px; background: #fff; }
.line input::placeholder { color: #8b9299; }
.w-grade { width: 51px; }
.w-class { width: 62px; }
.w-text { width: 121px; }
.drop { display: flex; align-items: center; gap: 3px; height: 24px; margin-left: -1px; padding: 0 5px; border: 1px solid #dfe2e5; border-radius: 2px; background: #f8f9fa; }
.btn.submit { height: 24px; padding: 0 6px; }
.absence hr { margin: 6px 0 4px; border: 0; border-top: 2px solid #eceef0; }

.facts th, .facts td { padding: 5px 4px 2px; border-bottom: 1px solid #dfe3e7; vertical-align: top; }
.facts th { width: 94px; border-right: 1px solid #dfe3e7; background: #f6f8fb; text-align: center; }
.facts td { padding-left: 19px; }
.facts.status { height: 247px; }
.facts.remarks { height: 141px; }

.presence { display: flex; height: 100px; overflow: hidden; }
.presence table { flex: 1; align-self: flex-start; }
.presence th { height: 26px; background: #f6f8fb; font-weight: 500; }
.presence td { height: 25px; padding-left: 5px; }
.presence th, .presence td { border: 1px solid #dfe3e7; border-top: 0; border-left-width: 0; }
.presence .c-name { width: 94px; }
.presence .c-leave { width: 94px; }

/* Scroll bars */
.scroll { display: flex; flex-direction: column; align-items: center; flex: none; width: 13px; background: #f1f1f1; }
.scroll .thumb { flex: 1; width: 10px; background: #b9b9b9; }
.arrow-up, .arrow-down { width: 0; margin: 5px 0; border: 3px solid transparent; }
.arrow-up { border-top: 0; border-bottom-color: #8a8a8a; }
.arrow-down { margin-top: auto; border-bottom: 0; border-top-color: #333; }
.window-scroll .thumb { flex: 0 0 79%; }
```
